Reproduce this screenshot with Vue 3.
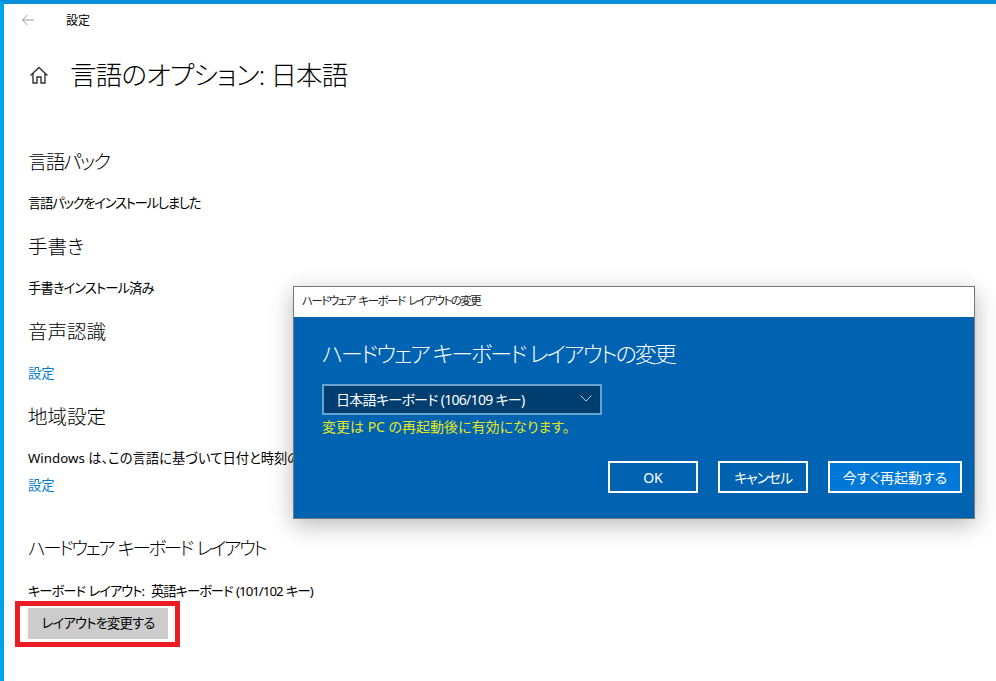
<template>
  <div class="screen">
    <div class="settings">
      <header class="topbar">
        <svg class="back" width="14" height="12" viewBox="0 0 14 12" fill="none" stroke="#9a9a9a" stroke-width="1">
          <path d="M13 6H1.5M6.5 1L1.5 6l5 5" />
        </svg>
        <span class="app-name">設定</span>
      </header>
      <div class="title-row">
        <svg class="home" width="20" height="20" viewBox="0 0 20 20" fill="none" stroke="#333" stroke-width="1.4">
          <path d="M1.5 10.5L10 2.5l8.5 8M4 8.5v9.5h4v-6h4v6h4V8.5" />
        </svg>
        <h1 class="title">言語のオプション: 日本語</h1>
      </div>
      <section v-for="s in sections" :key="s.heading" class="section">
        <h2 class="heading" :class="s.headingClass">{{ s.heading }}</h2>
        <p v-if="s.text" class="body" :class="s.textClass">{{ s.text }}</p>
        <a v-if="s.link" class="link" :class="{ tight: s.text }">{{ s.link }}</a>
      </section>
      <section class="section keyboard">
        <h2 class="heading kana-heavy">ハードウェア キーボード レイアウト</h2>
        <p class="body current">キーボード レイアウト:&nbsp; 英語キーボード (101/102 キー)</p>
        <div class="highlight">
          <button class="change">レイアウトを変更する</button>
        </div>
      </section>
    </div>
    <div class="dialog">
      <div class="dialog-title">ハードウェア キーボード レイアウトの変更</div>
      <div class="dialog-body">
        <div class="dialog-heading">ハードウェア キーボード レイアウトの変更</div>
        <div class="select">
          <span>日本語キーボード (106/109 キー)</span>
          <svg width="12" height="7" viewBox="0 0 12 7" fill="none" stroke="#b8cfe2" stroke-width="1">
            <path d="M.5 .5l5.5 5.5 5.5-5.5" />
          </svg>
        </div>
        <div class="notice">変更は PC の再起動後に有効になります。</div>
        <div class="actions">
          <button class="action ok">OK</button>
          <button class="action cancel">キャンセル</button>
          <button class="action restart">今すぐ再起動する</button>
        </div>
      </div>
    </div>
  </div>
</template>

<script setup>
const sections = [
  { heading: '言語パック', headingClass: 'kana-light', text: '言語パックをインストールしました', textClass: 'kana-body' },
  { heading: '手書き', text: '手書きインストール済み', textClass: 'kana-body-light' },
  { heading: '音声認識', link: '設定' },
  { heading: '地域設定', text: 'Windows は、この言語に基づいて日付と時刻の書式を設定します', link: '設定' },
]
</script>

<style>
html, body { margin: 0; background: #fff; }
</style>

<style scoped>
.screen {
  position: relative;
  width: 996px;
  height: 681px;
  box-sizing: border-box;
  overflow: hidden;
  background: #fff;
  border-top: 4px solid #0a8fdc;
  border-left: 4px solid #00a2e8;
  font-family: "Noto Sans", "Noto Sans CJK JP", sans-serif;
  font-feature-settings: "palt";
  color: #000;
}
.settings { padding-left: 24px; }
.topbar { display: flex; align-items: center; height: 32px; margin-left: -7px; }
.back { margin-right: 31px; }
.app-name { font-size: 12px; }
.title-row { display: flex; align-items: center; height: 40px; margin-top: 19px; }
.home { margin-right: 24px; margin-left: 1px; }
.title { margin: 0 0 0 -3px; font-size: 26.5px; font-weight: 300; line-height: 40px; letter-spacing: -0.8px; }
.section { height: 85px; }
.section:first-of-type { margin-top: 52px; }
.heading { margin: 0; height: 30px; font-size: 19.5px; line-height: 30px; font-weight: 300; }
.kana-light { letter-spacing: -1.8px; }
.kana-heavy { font-size: 18.5px; letter-spacing: -2.4px; word-spacing: 2px; }
.body { margin: 17px 0 0; font-size: 13.3px; line-height: 18px; white-space: nowrap; }
.kana-body { letter-spacing: -1.25px; }
.kana-body-light { letter-spacing: -0.9px; }
.link { display: block; margin-top: 17px; font-size: 13.3px; line-height: 18px; color: #0078d4; }
.link.tight { margin-top: 9px; }
.section:nth-of-type(4) { height: 131px; }
.keyboard { height: auto; }
.current { margin-top: 19px; letter-spacing: -1px; word-spacing: 1px; }
.highlight {
  width: 165px;
  height: 46px;
  box-sizing: border-box;
  margin: 1px 0 0 -13px;
  padding: 2px 0 0 8px;
  border: 5px solid #ed1c24;
  background: #fff;
}
.change {
  display: block;
  width: 140px;
  height: 31px;
  padding: 0 0 2px;
  border: 0;
  background: #ccc;
  color: #000;
  font: inherit;
  font-feature-settings: "palt";
  font-size: 13.3px;
  letter-spacing: -0.8px;
}
.dialog {
  position: absolute;
  left: 289px;
  top: 282px;
  width: 682px;
  height: 233px;
  box-sizing: border-box;
  display: flex;
  flex-direction: column;
  border: 1px solid #777;
  box-shadow: 0 6px 22px rgba(0, 0, 0, 0.28);
}
.dialog-title {
  height: 30px;
  padding-left: 8px;
  background: #fff;
  color: #222;
  font-size: 11.5px;
  line-height: 28px;
  letter-spacing: -1.5px;
  word-spacing: 2px;
}
.dialog-body {
  flex: 1;
  padding: 0 12px 0 28px;
  background: #0063b1;
  color: #fff;
}
.dialog-heading { margin-top: 21px; font-size: 22px; line-height: 30px; font-weight: 300; letter-spacing: -1.95px; }
.select {
  display: flex;
  align-items: center;
  justify-content: space-between;
  box-sizing: border-box;
  width: 280px;
  height: 31px;
  margin-top: 16px;
  padding: 0 8px 2px 12px;
  border: 2px solid #6ba3d0;
  background: #003e6f;
  font-size: 14px;
  letter-spacing: -0.7px;
}
.notice { margin-top: 2px; color: #e6e61e; font-size: 14px; line-height: 19px; }
.actions { display: flex; justify-content: flex-end; gap: 20px; margin-top: 25px; }
.action {
  height: 32px;
  width: 90px;
  padding: 0;
  border: 2px solid #fff;
  background: transparent;
  color: #fff;
  font: inherit;
  font-feature-settings: "palt";
  font-size: 14px;
}
.cancel { letter-spacing: -1.2px; }
.restart { width: 134px; background: #0078d7; }
</style>
